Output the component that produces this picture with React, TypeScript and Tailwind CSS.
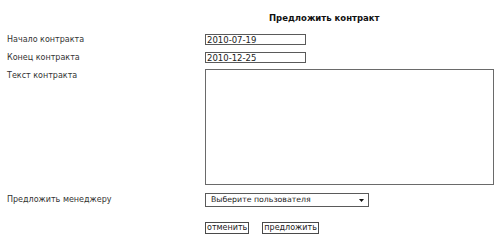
import React from 'react';

const field = "h-[11px] border border-[#5a5a5a] bg-white px-[1px] leading-[9px] text-[8.5px] text-[#222]";
const btn = "h-[12px] border border-[#4a4a4a] bg-white px-[1px] leading-[10px] text-[#222]";

export default function App() {
  return (
    <div className="w-[500px] h-[240px] bg-white pt-[12px] pl-[7px] font-['DejaVu_Sans',sans-serif] text-[8px] text-[#333]">
      <div className="pl-[262px] h-[12px] font-bold text-[8.5px] text-[#111]">Предложить контракт</div>

      <div className="mt-[10px] flex flex-col">
        <div className="flex items-center h-[11px]">
          <span className="w-[198px]">Начало контракта</span>
          <input className={`${field} w-[101px]`} defaultValue="2010-07-19" />
        </div>

        <div className="flex items-center h-[11px] mt-[7px]">
          <span className="w-[198px]">Конец контракта</span>
          <input className={`${field} w-[101px]`} defaultValue="2010-12-25" />
        </div>

        <div className="flex mt-[6px]">
          <span className="w-[198px] pt-[1px]">Текст контракта</span>
          <textarea className="w-[289px] h-[116px] border border-[#6a6a6a] bg-white resize-none" />
        </div>

        <div className="flex items-center mt-[8px] h-[14px]">
          <span className="w-[198px]">Предложить менеджеру</span>
          <div className="w-[164px] h-[14px] border border-[#5a5a5a] flex items-center justify-between pl-[5px] pr-[4px] text-[7.8px] text-[#222]">
            <span>Выберите пользователя</span>
            <svg width="5" height="3" viewBox="0 0 5 3"><path d="M0 0h5L2.5 3z" fill="#111" /></svg>
          </div>
        </div>

        <div className="flex mt-[15px] pl-[198px] gap-[13px]">
          <button className={btn}>отменить</button>
          <button className={btn}>предложить</button>
        </div>
      </div>
    </div>
  );
}
